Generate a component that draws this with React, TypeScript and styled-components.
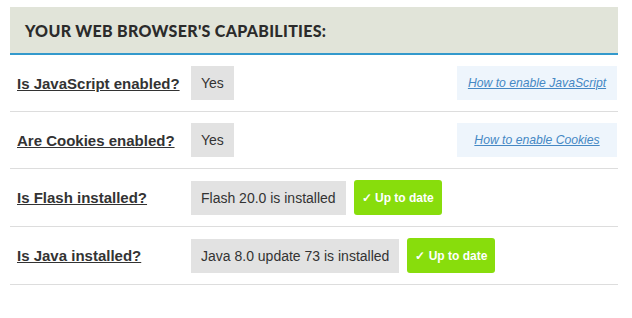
import styled, { createGlobalStyle } from 'styled-components'

const GlobalStyle = createGlobalStyle`
  body {
    margin: 0;
    background: #ffffff;
    font-family: "Liberation Sans", Arial, sans-serif;
  }
`

const Panel = styled.div`
  width: 608px;
  margin: 7px 0 0 10px;
`

const Header = styled.div`
  height: 46px;
  display: flex;
  align-items: center;
  padding-left: 15px;
  background: #e1e4d9;
  border-bottom: 2px solid #3399cc;
`

const HeaderTitle = styled.h2`
  margin: 0;
  font-family: Lato, "Liberation Sans", sans-serif;
  font-size: 16px;
  font-weight: 900;
  color: #2b2b2b;
  letter-spacing: 0.3px;
`

const Row = styled.div`
  display: flex;
  align-items: center;
  padding: 11px 0;
  border-bottom: 1px solid #dddddd;
`

const Label = styled.a`
  width: 174px;
  padding-left: 7px;
  font-size: 15px;
  font-weight: 700;
  color: #333333;
  text-decoration: underline;
`

const ValueBox = styled.div`
  height: 34px;
  display: flex;
  align-items: center;
  padding: 0 10px;
  background: #e2e2e2;
  color: #333333;
  font-size: 14px;
`

const StatusBadge = styled.div`
  height: 35px;
  display: flex;
  align-items: center;
  margin-left: 8px;
  padding: 0 8px;
  border-radius: 3px;
  background: #88dd0c;
  color: #ffffff;
  font-size: 12px;
  font-weight: 700;
`

const HelpBox = styled.div`
  width: 160px;
  height: 34px;
  display: flex;
  align-items: center;
  justify-content: center;
  margin-left: auto;
  margin-right: 1px;
  background: #eef5fc;
`

const HelpLink = styled.a`
  font-size: 12.2px;
  font-style: italic;
  color: #4588c4;
  text-decoration: underline;
`

interface Capability {
  question: string;
  value: string;
  upToDate?: boolean;
  help?: string;
}

const capabilities: Capability[] = [
  { question: 'Is JavaScript enabled?', value: 'Yes', help: 'How to enable JavaScript' },
  { question: 'Are Cookies enabled?', value: 'Yes', help: 'How to enable Cookies' },
  { question: 'Is Flash installed?', value: 'Flash 20.0 is installed', upToDate: true },
  { question: 'Is Java installed?', value: 'Java 8.0 update 73 is installed', upToDate: true },
]

export default function App() {
  return (
    <>
      <GlobalStyle />
      <Panel>
        <Header>
          <HeaderTitle>YOUR WEB BROWSER'S CAPABILITIES:</HeaderTitle>
        </Header>
        {capabilities.map((c) => (
          <Row key={c.question}>
            <Label>{c.question}</Label>
            <ValueBox>{c.value}</ValueBox>
            {c.upToDate && <StatusBadge>✓ Up to date</StatusBadge>}
            {c.help && (
              <HelpBox>
                <HelpLink>{c.help}</HelpLink>
              </HelpBox>
            )}
          </Row>
        ))}
      </Panel>
    </>
  )
}
